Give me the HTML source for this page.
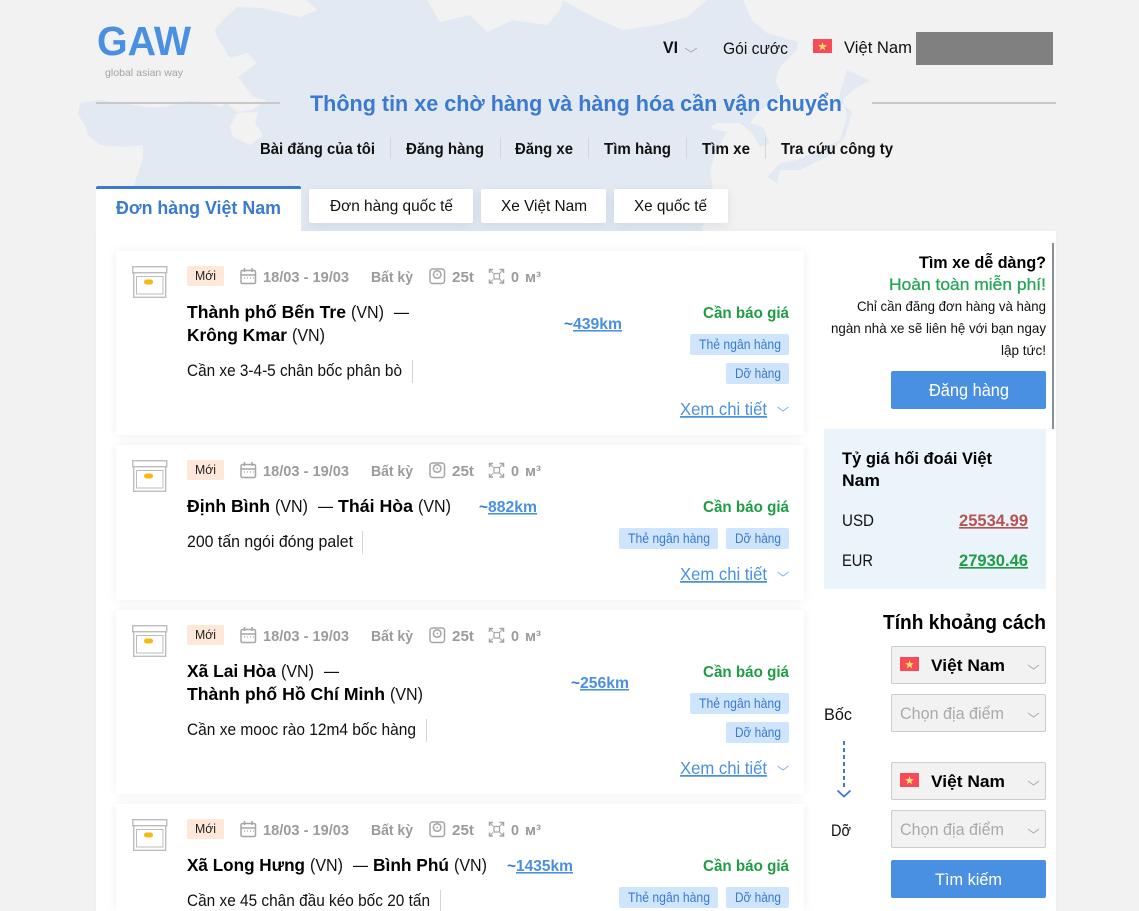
<!DOCTYPE html>
<html lang="vi"><head><meta charset="utf-8"><title>GAW</title>
<style>
html,body{margin:0;padding:0;width:1139px;height:911px;overflow:hidden}
body{background:#f2f2f2;position:relative;font-family:"Liberation Sans",sans-serif}
div{position:absolute;box-sizing:border-box}
svg{position:absolute;left:0;top:0}
.card{left:116px;width:688px;background:#fff;box-shadow:0 0 10px rgba(0,0,0,.07);border-radius:2px}
.tab{top:189px;height:34px;background:#fff;border-radius:2px;box-shadow:0 3px 10px rgba(60,80,120,.12)}
text{font-family:"Liberation Sans",sans-serif;white-space:pre}
.b{font-weight:700}
.g{font-weight:700;font-size:14.5px;fill:#9b9b9b}
.r{font-size:17.5px;fill:#111}
.rb{font-size:17.5px;font-weight:700;fill:#000}
.d{font-size:16.5px;fill:#111}
.q{font-size:15.5px;font-weight:700;fill:#1f9d45}
.t{font-size:13.5px;fill:#3a7bd0}
.x{font-size:17.5px;fill:#4a90e2;text-decoration:underline}
.k{font-size:15.5px;font-weight:700;fill:#4a90e2;text-decoration:underline}
.ti{font-size:15.5px;font-weight:700;fill:#3a7bd0}
.n{font-size:15.5px;font-weight:700;fill:#111}
.m{font-size:12.5px;fill:#222}
.s{font-size:14px;fill:#111}
.c{fill:none;stroke:#aaa;stroke-width:1}
.ic{fill:none;stroke:#a5a5a5;stroke-width:1.5}
</style></head><body>

<svg width="1139" height="911" viewBox="0 0 1139 911">
<path fill="#e3e9f3" d="M307 0L317 10L300 17L262 8L237 7L223 20L215 30L217 37L230 58L247 53L257 63L238 77L253 97L267 100L252 110L237 112L227 103L220 107L207 102L190 100L165 107L147 107L120 103L100 100L80 103L78 115L85 125L88 135L100 145L125 147L143 145L143 157L138 173L133 187L130 235L700 235L713 190L710 170L717 150L727 132L710 128L717 123L740 123L752 133L760 147L770 143L763 127L750 123L760 110L783 97L775 80L780 67L797 50L798 42L767 33L752 20L743 0L707 0L687 17L657 25L623 30L600 20L580 10L563 0L560 10L547 25L513 20L487 32L470 15L440 22L427 0Z"/>
<path fill="#e3e9f3" d="M847 70L870 80L853 90L843 100L847 117L840 140L820 150L797 160L780 163L767 177L777 183L780 170L800 170L827 157L845 137L852 112L838 100Z"/>
<path fill="#f2f2f2" d="M237 113L230 127L233 137L250 145L263 135L255 123L258 112Z"/>
<path fill="#f2f2f2" d="M172 87L187 92L183 100L207 102L220 107L227 103L215 90L190 86Z"/>
<ellipse cx="125" cy="159" rx="5" ry="2" fill="#f2f2f2"/>
</svg>

<div style="left:916px;top:32px;width:137px;height:33px;background:#808080"></div>
<div style="left:96px;top:102px;width:184px;height:2px;background:#c8c8c8"></div>
<div style="left:872px;top:102px;width:184px;height:2px;background:#c8c8c8"></div>
<div style="left:390px;top:137px;width:1px;height:22px;background:#d5d5d5"></div>
<div style="left:500px;top:137px;width:1px;height:22px;background:#d5d5d5"></div>
<div style="left:588px;top:137px;width:1px;height:22px;background:#d5d5d5"></div>
<div style="left:686px;top:137px;width:1px;height:22px;background:#d5d5d5"></div>
<div style="left:765px;top:137px;width:1px;height:22px;background:#d5d5d5"></div>

<div class="tab" style="left:309px;width:164px"></div>
<div class="tab" style="left:481px;width:125px"></div>
<div class="tab" style="left:614px;width:114px"></div>
<div style="left:96px;top:231px;width:960px;height:680px;background:#fff;border-radius:2px 2px 0 0;box-shadow:0 0 6px rgba(0,0,0,.03)"></div>
<div style="left:96px;top:186px;width:205px;height:46px;background:#fff;border-top:3px solid #3a7bd0;border-radius:2px 2px 0 0"></div>

<div class="card" style="top:251px;height:184px"></div>
<div class="card" style="top:445px;height:155px"></div>
<div class="card" style="top:610px;height:184px"></div>
<div class="card" style="top:804px;height:107px;border-radius:2px 2px 0 0"></div>

<div style="left:1052px;top:243px;width:2px;height:186px;background:#8a8f96"></div>
<div style="left:891px;top:371px;width:155px;height:38px;background:#4a90e2;border-radius:2px"></div>
<div style="left:824px;top:429px;width:222px;height:160px;background:#ebf3fb"></div>
<div style="left:891px;top:646px;width:155px;height:38px;background:#f2f2f2;border:1px solid #ccc;border-radius:2px"></div>
<div style="left:891px;top:694px;width:155px;height:38px;background:#f2f2f2;border:1px solid #ccc;border-radius:2px"></div>
<div style="left:891px;top:762px;width:155px;height:38px;background:#f2f2f2;border:1px solid #ccc;border-radius:2px"></div>
<div style="left:891px;top:810px;width:155px;height:38px;background:#f2f2f2;border:1px solid #ccc;border-radius:2px"></div>
<div style="left:891px;top:860px;width:155px;height:38px;background:#4a90e2;border-radius:2px"></div>

<svg width="1139" height="911" viewBox="0 0 1139 911">
<defs>
<g id="flag"><rect width="19" height="14" fill="#f94a58"/><path d="M9.5 3L10.6 6.2L14 6.2L11.3 8.2L12.3 11.4L9.5 9.5L6.7 11.4L7.7 8.2L5 6.2L8.4 6.2Z" fill="#ffe36a"/></g>
<g id="box">
<rect x="132.7" y="266.7" width="34" height="6" fill="none" stroke="#bdbdbd" stroke-width="1.4"/>
<path d="M133.7 272.7V297.3H165.7V272.7" fill="none" stroke="#bdbdbd" stroke-width="1.4"/>
<rect x="136.5" y="276.5" width="26.5" height="17.5" fill="none" stroke="#bdbdbd" stroke-width="1"/>
<rect x="144" y="279.5" width="9" height="5" rx="2.5" fill="#f5b915"/>
</g>
<g id="cal">
<rect x="241" y="270.5" width="14.5" height="13" rx="1.5" class="ic"/>
<path d="M241 275H255.5M244.5 268V272M252 268V272" class="ic"/>
<path d="M244 278h1M247 278h1M250 278h1M253 278h1" stroke="#a5a5a5" stroke-width="1.2"/>
</g>
<g id="wgt">
<rect x="430" y="269" width="14.5" height="14.5" rx="2.5" class="ic"/>
<circle cx="437.2" cy="274.5" r="3.8" class="ic" stroke-width="1.2"/>
<circle cx="437.2" cy="274.5" r=".9" fill="#a5a5a5"/>
</g>
<g id="exp" fill="none" stroke="#a5a5a5" stroke-width="1.5">
<rect x="494" y="273.5" width="5.5" height="5.5" stroke-width="1.2"/>
<path d="M489.5 273V269.5H493M499.5 269.5H503.5V273M489.5 279.5V283H493M499.5 283H503.5V279.5"/>
<path d="M490 270L493 273M503 270L500 273M490 282.5L493 279.5M503 282.5L500 279.5" stroke-width="1"/>
</g>
</defs>

<!-- header -->
<text x="97" y="55" class="b" font-size="41" fill="#4a90e2" textLength="94" lengthAdjust="spacingAndGlyphs">GAW</text>
<text x="105" y="76" font-size="10.5" fill="#a3a3a3" textLength="78" lengthAdjust="spacingAndGlyphs">global asian way</text>
<text x="663" y="53" class="b" font-size="16.5" fill="#111" textLength="15" lengthAdjust="spacingAndGlyphs">VI</text>
<path d="M685 48L691 52L697 48" class="c"/>
<text x="723" y="54" font-size="16.5" fill="#111" textLength="65" lengthAdjust="spacingAndGlyphs">Gói cước</text>
<use href="#flag" x="813" y="39"/>
<text x="844" y="53" font-size="16.5" fill="#111" textLength="68" lengthAdjust="spacingAndGlyphs">Việt Nam</text>
<text x="310" y="111" class="b" font-size="22.5" fill="#3a7bd0" textLength="532" lengthAdjust="spacingAndGlyphs">Thông tin xe chờ hàng và hàng hóa cần vận chuyển</text>
<text x="260" y="154" class="n" textLength="115" lengthAdjust="spacingAndGlyphs">Bài đăng của tôi</text>
<text x="406" y="154" class="n" textLength="78" lengthAdjust="spacingAndGlyphs">Đăng hàng</text>
<text x="515" y="154" class="n" textLength="58" lengthAdjust="spacingAndGlyphs">Đăng xe</text>
<text x="604" y="154" class="n" textLength="67" lengthAdjust="spacingAndGlyphs">Tìm hàng</text>
<text x="702" y="154" class="n" textLength="48" lengthAdjust="spacingAndGlyphs">Tìm xe</text>
<text x="781" y="154" class="n" textLength="112" lengthAdjust="spacingAndGlyphs">Tra cứu công ty</text>
<text x="116" y="214" class="b" font-size="18" fill="#3a7bd0" textLength="165" lengthAdjust="spacingAndGlyphs">Đơn hàng Việt Nam</text>
<text x="330" y="211" font-size="16" fill="#111" textLength="123" lengthAdjust="spacingAndGlyphs">Đơn hàng quốc tế</text>
<text x="501" y="211" font-size="16" fill="#111" textLength="86" lengthAdjust="spacingAndGlyphs">Xe Việt Nam</text>
<text x="634" y="211" font-size="16" fill="#111" textLength="73" lengthAdjust="spacingAndGlyphs">Xe quốc tế</text>

<!-- card 1 -->
<g><use href="#box"/><use href="#cal"/><use href="#wgt"/><use href="#exp"/></g>
<g>
<rect x="187" y="266" width="37" height="20" rx="2" fill="#ffe8d9"/>
<text x="195" y="280" class="m" textLength="21" lengthAdjust="spacingAndGlyphs">Mới</text>
<text x="263" y="282" class="g" textLength="86" lengthAdjust="spacingAndGlyphs">18/03 - 19/03</text>
<text x="371" y="282" class="g" textLength="42" lengthAdjust="spacingAndGlyphs">Bất kỳ</text>
<text x="452" y="282" class="g" textLength="22" lengthAdjust="spacingAndGlyphs">25t</text>
<text x="511" y="282" class="g" textLength="8" lengthAdjust="spacingAndGlyphs">0</text>
<text x="525" y="282" class="g" textLength="16" lengthAdjust="spacingAndGlyphs">м³</text>
</g>
<text x="187" y="318" class="rb" textLength="159" lengthAdjust="spacingAndGlyphs">Thành phố Bến Tre</text>
<text x="351" y="318" class="r" textLength="33" lengthAdjust="spacingAndGlyphs">(VN)</text>
<text x="394" y="318" class="r" textLength="15" lengthAdjust="spacingAndGlyphs">—</text>
<text x="187" y="341" class="rb" textLength="100" lengthAdjust="spacingAndGlyphs">Krông Kmar</text>
<text x="292" y="341" class="r" textLength="33" lengthAdjust="spacingAndGlyphs">(VN)</text>
<text x="187" y="376" class="d" textLength="215" lengthAdjust="spacingAndGlyphs">Cần xe 3-4-5 chân bốc phân bò</text>
<path d="M412.5 360V383" stroke="#d5d5d5"/>
<text x="564" y="329" class="ti" textLength="9" lengthAdjust="spacingAndGlyphs">~</text>
<text x="573" y="329" class="k" textLength="49" lengthAdjust="spacingAndGlyphs">439km</text>
<text x="703" y="318" class="q" textLength="86" lengthAdjust="spacingAndGlyphs">Cần báo giá</text>
<rect x="690" y="334" width="99" height="21" rx="2" fill="#cfe4fd"/>
<text x="699" y="349" class="t" textLength="82" lengthAdjust="spacingAndGlyphs">Thẻ ngân hàng</text>
<rect x="726" y="363" width="63" height="21" rx="2" fill="#cfe4fd"/>
<text x="735" y="378" class="t" textLength="46" lengthAdjust="spacingAndGlyphs">Dỡ hàng</text>
<text x="680" y="415" class="x" textLength="87" lengthAdjust="spacingAndGlyphs">Xem chi tiết</text>
<path d="M777.500 407L783 411L788.500 407" fill="none" stroke="#7fb0ea"/>

<!-- card 2 -->
<g transform="translate(0,194)">
<use href="#box"/><use href="#cal"/><use href="#wgt"/><use href="#exp"/>
<rect x="187" y="266" width="37" height="20" rx="2" fill="#ffe8d9"/>
<text x="195" y="280" class="m" textLength="21" lengthAdjust="spacingAndGlyphs">Mới</text>
<text x="263" y="282" class="g" textLength="86" lengthAdjust="spacingAndGlyphs">18/03 - 19/03</text>
<text x="371" y="282" class="g" textLength="42" lengthAdjust="spacingAndGlyphs">Bất kỳ</text>
<text x="452" y="282" class="g" textLength="22" lengthAdjust="spacingAndGlyphs">25t</text>
<text x="511" y="282" class="g" textLength="8" lengthAdjust="spacingAndGlyphs">0</text>
<text x="525" y="282" class="g" textLength="16" lengthAdjust="spacingAndGlyphs">м³</text>
</g>
<text x="187" y="512" class="rb" textLength="83" lengthAdjust="spacingAndGlyphs">Định Bình</text>
<text x="275" y="512" class="r" textLength="33" lengthAdjust="spacingAndGlyphs">(VN)</text>
<text x="318" y="512" class="r" textLength="15" lengthAdjust="spacingAndGlyphs">—</text>
<text x="338" y="512" class="rb" textLength="75" lengthAdjust="spacingAndGlyphs">Thái Hòa</text>
<text x="418" y="512" class="r" textLength="33" lengthAdjust="spacingAndGlyphs">(VN)</text>
<text x="187" y="547" class="d" textLength="166" lengthAdjust="spacingAndGlyphs">200 tấn ngói đóng palet</text>
<path d="M362.500 531V554" stroke="#d5d5d5"/>
<text x="479" y="512" class="ti" textLength="9" lengthAdjust="spacingAndGlyphs">~</text>
<text x="488" y="512" class="k" textLength="49" lengthAdjust="spacingAndGlyphs">882km</text>
<text x="703" y="512" class="q" textLength="86" lengthAdjust="spacingAndGlyphs">Cần báo giá</text>
<rect x="619" y="528" width="99" height="21" rx="2" fill="#cfe4fd"/>
<text x="628" y="543" class="t" textLength="82" lengthAdjust="spacingAndGlyphs">Thẻ ngân hàng</text>
<rect x="726" y="528" width="63" height="21" rx="2" fill="#cfe4fd"/>
<text x="735" y="543" class="t" textLength="46" lengthAdjust="spacingAndGlyphs">Dỡ hàng</text>
<text x="680" y="580" class="x" textLength="87" lengthAdjust="spacingAndGlyphs">Xem chi tiết</text>
<path d="M777.500 572L783 576L788.500 572" fill="none" stroke="#7fb0ea"/>

<!-- card 3 -->
<g transform="translate(0,359)">
<use href="#box"/><use href="#cal"/><use href="#wgt"/><use href="#exp"/>
<rect x="187" y="266" width="37" height="20" rx="2" fill="#ffe8d9"/>
<text x="195" y="280" class="m" textLength="21" lengthAdjust="spacingAndGlyphs">Mới</text>
<text x="263" y="282" class="g" textLength="86" lengthAdjust="spacingAndGlyphs">18/03 - 19/03</text>
<text x="371" y="282" class="g" textLength="42" lengthAdjust="spacingAndGlyphs">Bất kỳ</text>
<text x="452" y="282" class="g" textLength="22" lengthAdjust="spacingAndGlyphs">25t</text>
<text x="511" y="282" class="g" textLength="8" lengthAdjust="spacingAndGlyphs">0</text>
<text x="525" y="282" class="g" textLength="16" lengthAdjust="spacingAndGlyphs">м³</text>
</g>
<text x="187" y="677" class="rb" textLength="89" lengthAdjust="spacingAndGlyphs">Xã Lai Hòa</text>
<text x="281" y="677" class="r" textLength="33" lengthAdjust="spacingAndGlyphs">(VN)</text>
<text x="324" y="677" class="r" textLength="15" lengthAdjust="spacingAndGlyphs">—</text>
<text x="187" y="700" class="rb" textLength="198" lengthAdjust="spacingAndGlyphs">Thành phố Hồ Chí Minh</text>
<text x="390" y="700" class="r" textLength="33" lengthAdjust="spacingAndGlyphs">(VN)</text>
<text x="187" y="735" class="d" textLength="229" lengthAdjust="spacingAndGlyphs">Cần xe mooc rào 12m4 bốc hàng</text>
<path d="M426.500 719V742" stroke="#d5d5d5"/>
<text x="571" y="688" class="ti" textLength="9" lengthAdjust="spacingAndGlyphs">~</text>
<text x="580" y="688" class="k" textLength="49" lengthAdjust="spacingAndGlyphs">256km</text>
<text x="703" y="677" class="q" textLength="86" lengthAdjust="spacingAndGlyphs">Cần báo giá</text>
<rect x="690" y="693" width="99" height="21" rx="2" fill="#cfe4fd"/>
<text x="699" y="708" class="t" textLength="82" lengthAdjust="spacingAndGlyphs">Thẻ ngân hàng</text>
<rect x="726" y="722" width="63" height="21" rx="2" fill="#cfe4fd"/>
<text x="735" y="737" class="t" textLength="46" lengthAdjust="spacingAndGlyphs">Dỡ hàng</text>
<text x="680" y="774" class="x" textLength="87" lengthAdjust="spacingAndGlyphs">Xem chi tiết</text>
<path d="M777.500 766L783 770L788.500 766" fill="none" stroke="#7fb0ea"/>

<!-- card 4 -->
<g transform="translate(0,553)">
<use href="#box"/><use href="#cal"/><use href="#wgt"/><use href="#exp"/>
<rect x="187" y="266" width="37" height="20" rx="2" fill="#ffe8d9"/>
<text x="195" y="280" class="m" textLength="21" lengthAdjust="spacingAndGlyphs">Mới</text>
<text x="263" y="282" class="g" textLength="86" lengthAdjust="spacingAndGlyphs">18/03 - 19/03</text>
<text x="371" y="282" class="g" textLength="42" lengthAdjust="spacingAndGlyphs">Bất kỳ</text>
<text x="452" y="282" class="g" textLength="22" lengthAdjust="spacingAndGlyphs">25t</text>
<text x="511" y="282" class="g" textLength="8" lengthAdjust="spacingAndGlyphs">0</text>
<text x="525" y="282" class="g" textLength="16" lengthAdjust="spacingAndGlyphs">м³</text>
</g>
<text x="187" y="871" class="rb" textLength="118" lengthAdjust="spacingAndGlyphs">Xã Long Hưng</text>
<text x="310" y="871" class="r" textLength="33" lengthAdjust="spacingAndGlyphs">(VN)</text>
<text x="353" y="871" class="r" textLength="15" lengthAdjust="spacingAndGlyphs">—</text>
<text x="373" y="871" class="rb" textLength="76" lengthAdjust="spacingAndGlyphs">Bình Phú</text>
<text x="454" y="871" class="r" textLength="33" lengthAdjust="spacingAndGlyphs">(VN)</text>
<text x="187" y="906" class="d" textLength="243" lengthAdjust="spacingAndGlyphs">Cần xe 45 chân đầu kéo bốc 20 tấn</text>
<path d="M440.500 890V911" stroke="#d5d5d5"/>
<text x="507" y="871" class="ti" textLength="9" lengthAdjust="spacingAndGlyphs">~</text>
<text x="516" y="871" class="k" textLength="57" lengthAdjust="spacingAndGlyphs">1435km</text>
<text x="703" y="871" class="q" textLength="86" lengthAdjust="spacingAndGlyphs">Cần báo giá</text>
<rect x="619" y="887" width="99" height="21" rx="2" fill="#cfe4fd"/>
<text x="628" y="902" class="t" textLength="82" lengthAdjust="spacingAndGlyphs">Thẻ ngân hàng</text>
<rect x="726" y="887" width="63" height="21" rx="2" fill="#cfe4fd"/>
<text x="735" y="902" class="t" textLength="46" lengthAdjust="spacingAndGlyphs">Dỡ hàng</text>

<!-- sidebar -->
<text x="919" y="268" class="b" font-size="17" fill="#000" textLength="127" lengthAdjust="spacingAndGlyphs">Tìm xe dễ dàng?</text>
<text x="889" y="290" font-size="17" fill="#27a556" stroke="#27a556" stroke-width=".3" textLength="157" lengthAdjust="spacingAndGlyphs">Hoàn toàn miễn phí!</text>
<text x="857" y="311" class="s" textLength="189" lengthAdjust="spacingAndGlyphs">Chỉ cần đăng đơn hàng và hàng</text>
<text x="831" y="333" class="s" textLength="215" lengthAdjust="spacingAndGlyphs">ngàn nhà xe sẽ liên hệ với bạn ngay</text>
<text x="1001" y="355" class="s" textLength="45" lengthAdjust="spacingAndGlyphs">lập tức!</text>
<text x="929" y="396" font-size="17.5" fill="#fff" textLength="80" lengthAdjust="spacingAndGlyphs">Đăng hàng</text>
<text x="842" y="464" class="b" font-size="17" fill="#000" textLength="150" lengthAdjust="spacingAndGlyphs">Tỷ giá hối đoái Việt</text>
<text x="842" y="486" class="b" font-size="17" fill="#000" textLength="38" lengthAdjust="spacingAndGlyphs">Nam</text>
<text x="842" y="526" font-size="16.5" fill="#111" textLength="32" lengthAdjust="spacingAndGlyphs">USD</text>
<text x="959" y="526" class="b" font-size="16.5" fill="#b85450" text-decoration="underline" textLength="69" lengthAdjust="spacingAndGlyphs">25534.99</text>
<text x="842" y="566" font-size="16.5" fill="#111" textLength="31" lengthAdjust="spacingAndGlyphs">EUR</text>
<text x="959" y="566" class="b" font-size="16.5" fill="#1f9d45" text-decoration="underline" textLength="69" lengthAdjust="spacingAndGlyphs">27930.46</text>
<text x="883" y="629" class="b" font-size="20" fill="#000" textLength="163" lengthAdjust="spacingAndGlyphs">Tính khoảng cách</text>

<use href="#flag" x="900" y="657"/>
<text x="931" y="671" class="b" font-size="17" fill="#000" textLength="74" lengthAdjust="spacingAndGlyphs">Việt Nam</text>
<path d="M1028 665L1033.500 669L1039 665" class="c"/>
<text x="900" y="719" font-size="16.5" fill="#aaa" textLength="104" lengthAdjust="spacingAndGlyphs">Chọn địa điểm</text>
<path d="M1028 713L1033.500 717L1039 713" class="c"/>
<text x="824" y="720" font-size="16.5" fill="#111" textLength="28" lengthAdjust="spacingAndGlyphs">Bốc</text>
<path d="M844 741V790" stroke="#3a7bd0" stroke-width="2" stroke-dasharray="4 3" fill="none"/>
<path d="M837.500 790.500L844 796.500L850.500 790.500" stroke="#3a7bd0" stroke-width="1.800" fill="none"/>
<use href="#flag" x="900" y="773"/>
<text x="931" y="787" class="b" font-size="17" fill="#000" textLength="74" lengthAdjust="spacingAndGlyphs">Việt Nam</text>
<path d="M1028 781L1033.500 785L1039 781" class="c"/>
<text x="900" y="835" font-size="16.5" fill="#aaa" textLength="104" lengthAdjust="spacingAndGlyphs">Chọn địa điểm</text>
<path d="M1028 829L1033.500 833L1039 829" class="c"/>
<text x="831" y="836" font-size="16.5" fill="#111" textLength="20" lengthAdjust="spacingAndGlyphs">Dỡ</text>
<text x="935" y="885" font-size="16.5" fill="#fff" textLength="67" lengthAdjust="spacingAndGlyphs">Tìm kiếm</text>
</svg>
</body></html>
